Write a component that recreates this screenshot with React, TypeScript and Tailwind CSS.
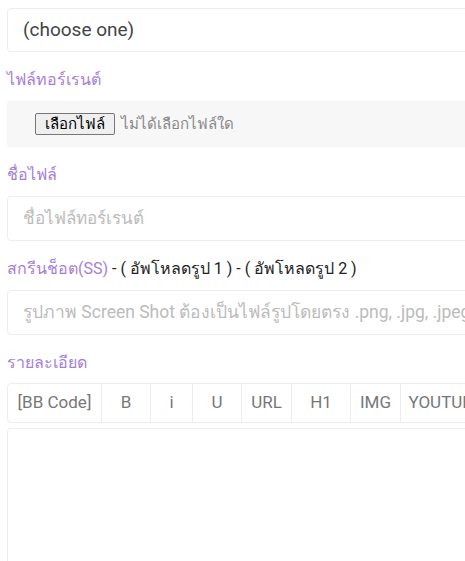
const tools = [
  { label: "[BB Code]", w: "w-[93px]" },
  { label: "B", w: "w-[49px]" },
  { label: "i", w: "w-[42px]" },
  { label: "U", w: "w-[49px]" },
  { label: "URL", w: "w-[50px]" },
  { label: "H1", w: "w-[59px]" },
  { label: "IMG", w: "w-[50px]" },
  { label: "YOUTUBE", w: "w-[90px]" },
];

const Label = ({ children }: { children: React.ReactNode }) => (
  <div className="mt-[17px] mb-[10px] text-[16px] leading-[22px] text-[#a57ed8] whitespace-nowrap">{children}</div>
);

export default function App() {
  return (
    <div className="w-[465px] h-[561px] overflow-hidden bg-white font-['Roboto','Noto_Sans',sans-serif]">
      <div className="w-[560px] pl-[7px] pt-[8px]">
        {/* category select */}
        <div className="h-[44px] border border-[#ededed] rounded-[4px] flex items-center pl-[15px] text-[19px] text-[#444]">
          (choose one)
        </div>

        <Label>ไฟล์ทอร์เรนต์</Label>
        <div className="h-[46px] bg-[#f7f7f7] rounded-[3px] flex items-center pl-[28px]">
          <button className="h-[22px] px-[9px] bg-[#efefef] border border-[#767676] rounded-[2px] text-[15px] leading-[18px] text-black">
            เลือกไฟล์
          </button>
          <span className="ml-[6px] text-[15px] text-[#888]">ไม่ได้เลือกไฟล์ใด</span>
        </div>

        <Label>ชื่อไฟล์</Label>
        <div className="h-[45px] border border-[#ededed] rounded-[4px] flex items-center pl-[15px] text-[17px] text-[#bbb]">
          ชื่อไฟล์ทอร์เรนต์
        </div>

        <Label>
          สกรีนช็อต(SS)
          <span className="text-[#222]"> - ( อัพโหลดรูป 1 ) - ( อัพโหลดรูป 2 )</span>
        </Label>
        <div className="h-[45px] border border-[#ededed] rounded-[4px] flex items-center pl-[15px] text-[17.5px] text-[#bbb] whitespace-nowrap">
          รูปภาพ Screen Shot ต้องเป็นไฟล์รูปโดยตรง .png, .jpg, .jpeg
        </div>

        <Label>รายละเอียด</Label>
        <div className="-mt-[1px] h-[40px] border border-[#ededed] rounded-[4px] flex">
          {tools.map((t, i) => (
            <div
              key={i}
              className={`${t.w} shrink-0 flex items-center justify-center text-[17px] text-[#777] ${
                i > 0 ? "border-l border-[#ededed]" : ""
              }`}
            >
              {t.label}
            </div>
          ))}
        </div>
        <div className="mt-[5px] h-[200px] border border-[#ededed] rounded-[4px]" />
      </div>
    </div>
  );
}
